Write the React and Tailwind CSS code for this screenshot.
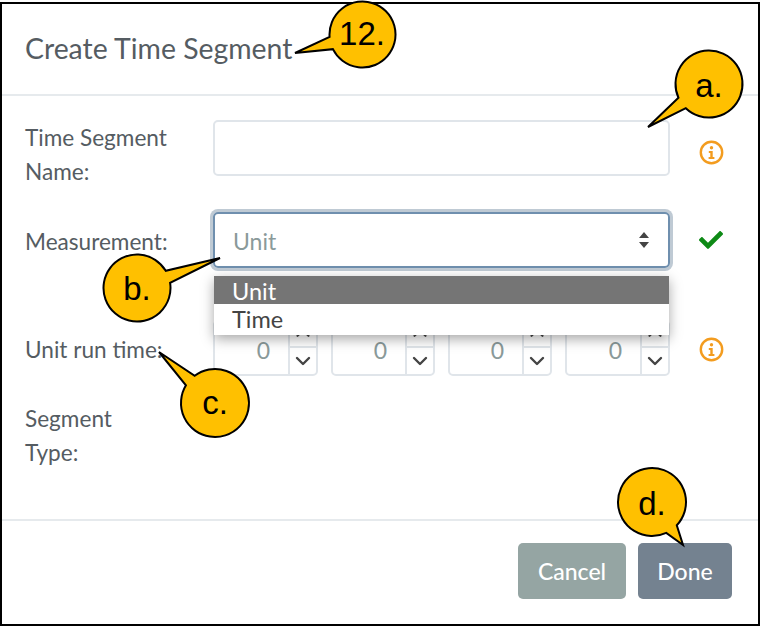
import React from "react";
import { ChevronDown, ChevronUp } from "lucide-react";
import { FaCheck } from "react-icons/fa";

const CALLOUTS = [
  { cx: 362.5, cy: 34.5, r: 33, tx: 295, ty: 53 },
  { cx: 709, cy: 84, r: 33.5, tx: 648, ty: 127 },
  { cx: 137, cy: 288, r: 33.5, tx: 220, ty: 258 },
  { cx: 215, cy: 403, r: 34, tx: 159, ty: 352 },
  { cx: 652, cy: 502, r: 34, tx: 683, ty: 545 },
];

// bubble with a pointed tail: the arc goes the long way round, the tail closes it
const calloutPath = ({ cx, cy, r, tx, ty }) => {
  const angle = Math.atan2(ty - cy, tx - cx);
  const spread = (11 * Math.PI) / 180;
  const x1 = cx + r * Math.cos(angle + spread);
  const y1 = cy + r * Math.sin(angle + spread);
  const x2 = cx + r * Math.cos(angle - spread);
  const y2 = cy + r * Math.sin(angle - spread);
  return `M${x1} ${y1} A${r} ${r} 0 1 1 ${x2} ${y2} L${tx} ${ty} Z`;
};

const Spinner = ({ className }) => (
  <div className={`flex h-14 rounded-[5px] border-2 border-[#e0e5ea] ${className}`}>
    <div className="flex-1 pt-[11px] pr-[18px] text-right text-[23px] leading-[34px] text-[#8a9a9a]">0</div>
    <div className="flex w-[28px] flex-col border-l-2 border-[#e0e5ea]">
      <div className="flex h-[26px] items-start justify-center overflow-hidden border-b-2 border-[#e0e5ea] text-[#444]">
        <ChevronUp size={22} strokeWidth={2.4} />
      </div>
      <div className="flex flex-1 items-center justify-center text-[#444]">
        <ChevronDown size={24} strokeWidth={2.4} />
      </div>
    </div>
  </div>
);

const InfoIcon = () => (
  <div className="flex w-[82px] justify-center text-[#f39c1f]">
    <svg width="25" height="25" viewBox="0 0 25 25" fill="none">
      <circle cx="12.5" cy="12.5" r="10.7" stroke="currentColor" strokeWidth="2.4" />
      <circle cx="12.5" cy="7.8" r="1.7" fill="currentColor" />
      <path d="M9.8 11h3.9v6h1.7v1.9H9.6V17h1.7v-4.1H9.8z" fill="currentColor" />
    </svg>
  </div>
);

const SortArrows = () => (
  <svg width="12" height="18" viewBox="0 0 12 18" className="text-[#444]">
    <path d="M6 1l5 6H1z M6 17l-5-6h10z" fill="currentColor" />
  </svg>
);

export default function App() {
  return (
    <div className="relative h-[626px] w-[760px] overflow-hidden bg-white pt-[2px] font-['Lato','Noto_Sans',sans-serif] text-[#555c62]">
      <div className="flex h-[624px] flex-col border-2 border-black bg-white">
        {/* header */}
        <div className="flex h-[92px] shrink-0 items-center border-b-2 border-[#e6eaed] pb-[2px] pl-[23px] text-[28.4px] text-[#555c62]">
          Create Time Segment
        </div>

        {/* form */}
        <div className="flex-1 pt-[24px] pl-[23px] text-[22.6px] leading-[34px]">
          <div className="mb-[23px] flex items-start">
            <div className="mt-px h-[68px] w-[188px]">
              Time Segment
              <br />
              Name:
            </div>
            <div className="h-14 w-[457px] rounded-[5px] border-2 border-[#e0e5ea]" />
            <div className="flex h-14 items-center pt-[8px]">
              <InfoIcon />
            </div>
          </div>

          <div className="mb-[52px] flex items-center">
            <div className="w-[188px] pt-[3px]">Measurement:</div>
            <div className="relative h-14 w-[457px]">
              <div className="flex h-14 items-center justify-between rounded-[5px] border-2 border-[#6f8fae] pr-[18px] pl-[18px] text-[23px] text-[#8a9a9a] shadow-[0_0_0_3px_#bfcad4]">
                <span className="pt-px">Unit</span>
                <SortArrows />
              </div>
              <div className="absolute top-[64px] left-px z-10 w-[455px] bg-white text-[23.5px] shadow-[0_4px_12px_rgba(0,0,0,0.35)]">
                <div className="h-[28px] bg-[#757575] pl-[18px] leading-[30px] text-white">Unit</div>
                <div className="h-[31px] pl-[18px] leading-[31px] text-[#444]">Time</div>
              </div>
            </div>
            <div className="flex w-[82px] justify-center text-[#0e8a16]">
              <FaCheck size={24} />
            </div>
          </div>

          <div className="mb-[27px] flex items-center">
            <div className="w-[188px] pt-[4px]">Unit run time:</div>
            <div className="flex w-[457px] justify-between">
              <Spinner className="w-[105px]" />
              <Spinner className="w-[104px]" />
              <Spinner className="w-[104px]" />
              <Spinner className="w-[105px]" />
            </div>
            <div className="pt-[2px]">
              <InfoIcon />
            </div>
          </div>

          <div className="-mt-px h-[68px]">
            Segment
            <br />
            Type:
          </div>
        </div>

        {/* footer */}
        <div className="flex h-[105px] shrink-0 items-start justify-end gap-3 border-t-2 border-[#e6eaed] pt-[22px] pr-[26px] text-[23px] font-medium text-white">
          <div className="flex h-14 w-[108px] items-center justify-center rounded-[5px] bg-[#95a5a3]">Cancel</div>
          <div className="flex h-14 w-[94px] items-center justify-center rounded-[5px] bg-[#748290]">Done</div>
        </div>
      </div>

      {/* annotation callouts */}
      <svg className="absolute top-0 left-0 z-20" width="760" height="626" viewBox="0 0 760 626">
        {CALLOUTS.map((c, i) => (
          <path key={i} d={calloutPath(c)} fill="#ffc000" stroke="#000" strokeWidth="2" />
        ))}
      </svg>
      <div className="absolute top-[12px] left-[328px] z-30 w-[68px] text-center font-['Liberation_Sans',sans-serif] text-[33px] leading-[44px] text-black">12.</div>
      <div className="absolute top-[64px] left-[675px] z-30 w-[68px] text-center font-['Liberation_Sans',sans-serif] text-[33px] leading-[44px] text-black">a.</div>
      <div className="absolute top-[267px] left-[103px] z-30 w-[68px] text-center font-['Liberation_Sans',sans-serif] text-[33px] leading-[44px] text-black">b.</div>
      <div className="absolute top-[381px] left-[181px] z-30 w-[68px] text-center font-['Liberation_Sans',sans-serif] text-[33px] leading-[44px] text-black">c.</div>
      <div className="absolute top-[482px] left-[618px] z-30 w-[68px] text-center font-['Liberation_Sans',sans-serif] text-[33px] leading-[44px] text-black">d.</div>
    </div>
  );
}
